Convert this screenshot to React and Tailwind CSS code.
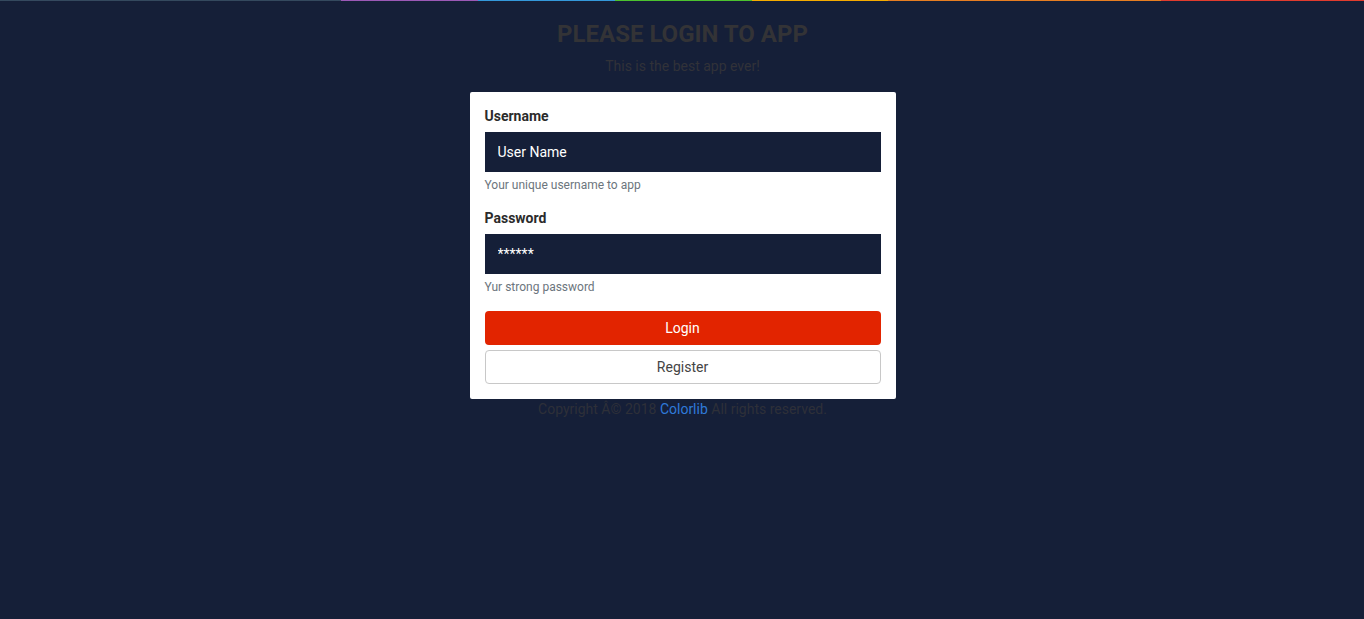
import React from 'react';

const bars = [
  'w-[341px] bg-[#34495e]',
  'w-[137px] bg-[#9b59b6]',
  'w-[137px] bg-[#3498db]',
  'w-[137px] bg-[#4cc22f]',
  'w-[136px] bg-[#f5ab00]',
  'w-[273px] bg-[#e67e22]',
  'flex-1 bg-[#e13b2e]',
];

const App = () => {
  return (
    <div className="min-h-screen bg-[#151f38] font-['Roboto',sans-serif]">
      {/* top colour strip */}
      <div className="flex h-px">
        {bars.map((c, i) => (
          <div key={i} className={c} />
        ))}
      </div>

      <div className="flex flex-col items-center pl-px">
        <h1 className="mt-[19px] text-[24px] font-bold leading-[29px] text-[#333336]">PLEASE LOGIN TO APP</h1>
        <p className="mt-[7px] text-[14px] leading-[20px] text-[#313238]">This is the best app ever!</p>

        <div className="mt-[16px] w-[426px] rounded-[2px] bg-white px-[15px] pt-[14px] pb-[15px]">
          <label className="mb-[5px] block text-[14px] font-bold leading-[21px] text-[#2b2b2b]">Username</label>
          <input
            type="text"
            defaultValue="User Name"
            className="block h-[40px] w-full bg-[#151f38] px-[13px] text-[14px] font-normal text-white outline-none"
          />
          <p className="mt-[4px] text-[12px] leading-[18px] text-[#6c757d]">Your unique username to app</p>

          <label className="mt-[14px] mb-[5px] block text-[14px] font-bold leading-[21px] text-[#2b2b2b]">Password</label>
          <input
            type="text"
            defaultValue="******"
            className="block h-[40px] w-full bg-[#151f38] px-[13px] text-[14px] font-normal text-white outline-none"
          />
          <p className="mt-[4px] text-[12px] leading-[18px] text-[#6c757d]">Yur strong password</p>

          <button className="mt-[15px] block h-[34px] w-full rounded-[4px] bg-[#e22400] text-[14px] font-normal text-white">
            Login
          </button>
          <button className="mt-[5px] block h-[34px] w-full rounded-[4px] border border-[#c8c8c8] bg-white text-[14px] text-[#444]">
            Register
          </button>
        </div>

        <p className="text-[14px] leading-[20px] text-[#2e3038]">
          Copyright Â© 2018 <a href="#" className="text-[#2f7ad8]">Colorlib</a> All rights reserved.
        </p>
      </div>
    </div>
  );
};

export default App;
